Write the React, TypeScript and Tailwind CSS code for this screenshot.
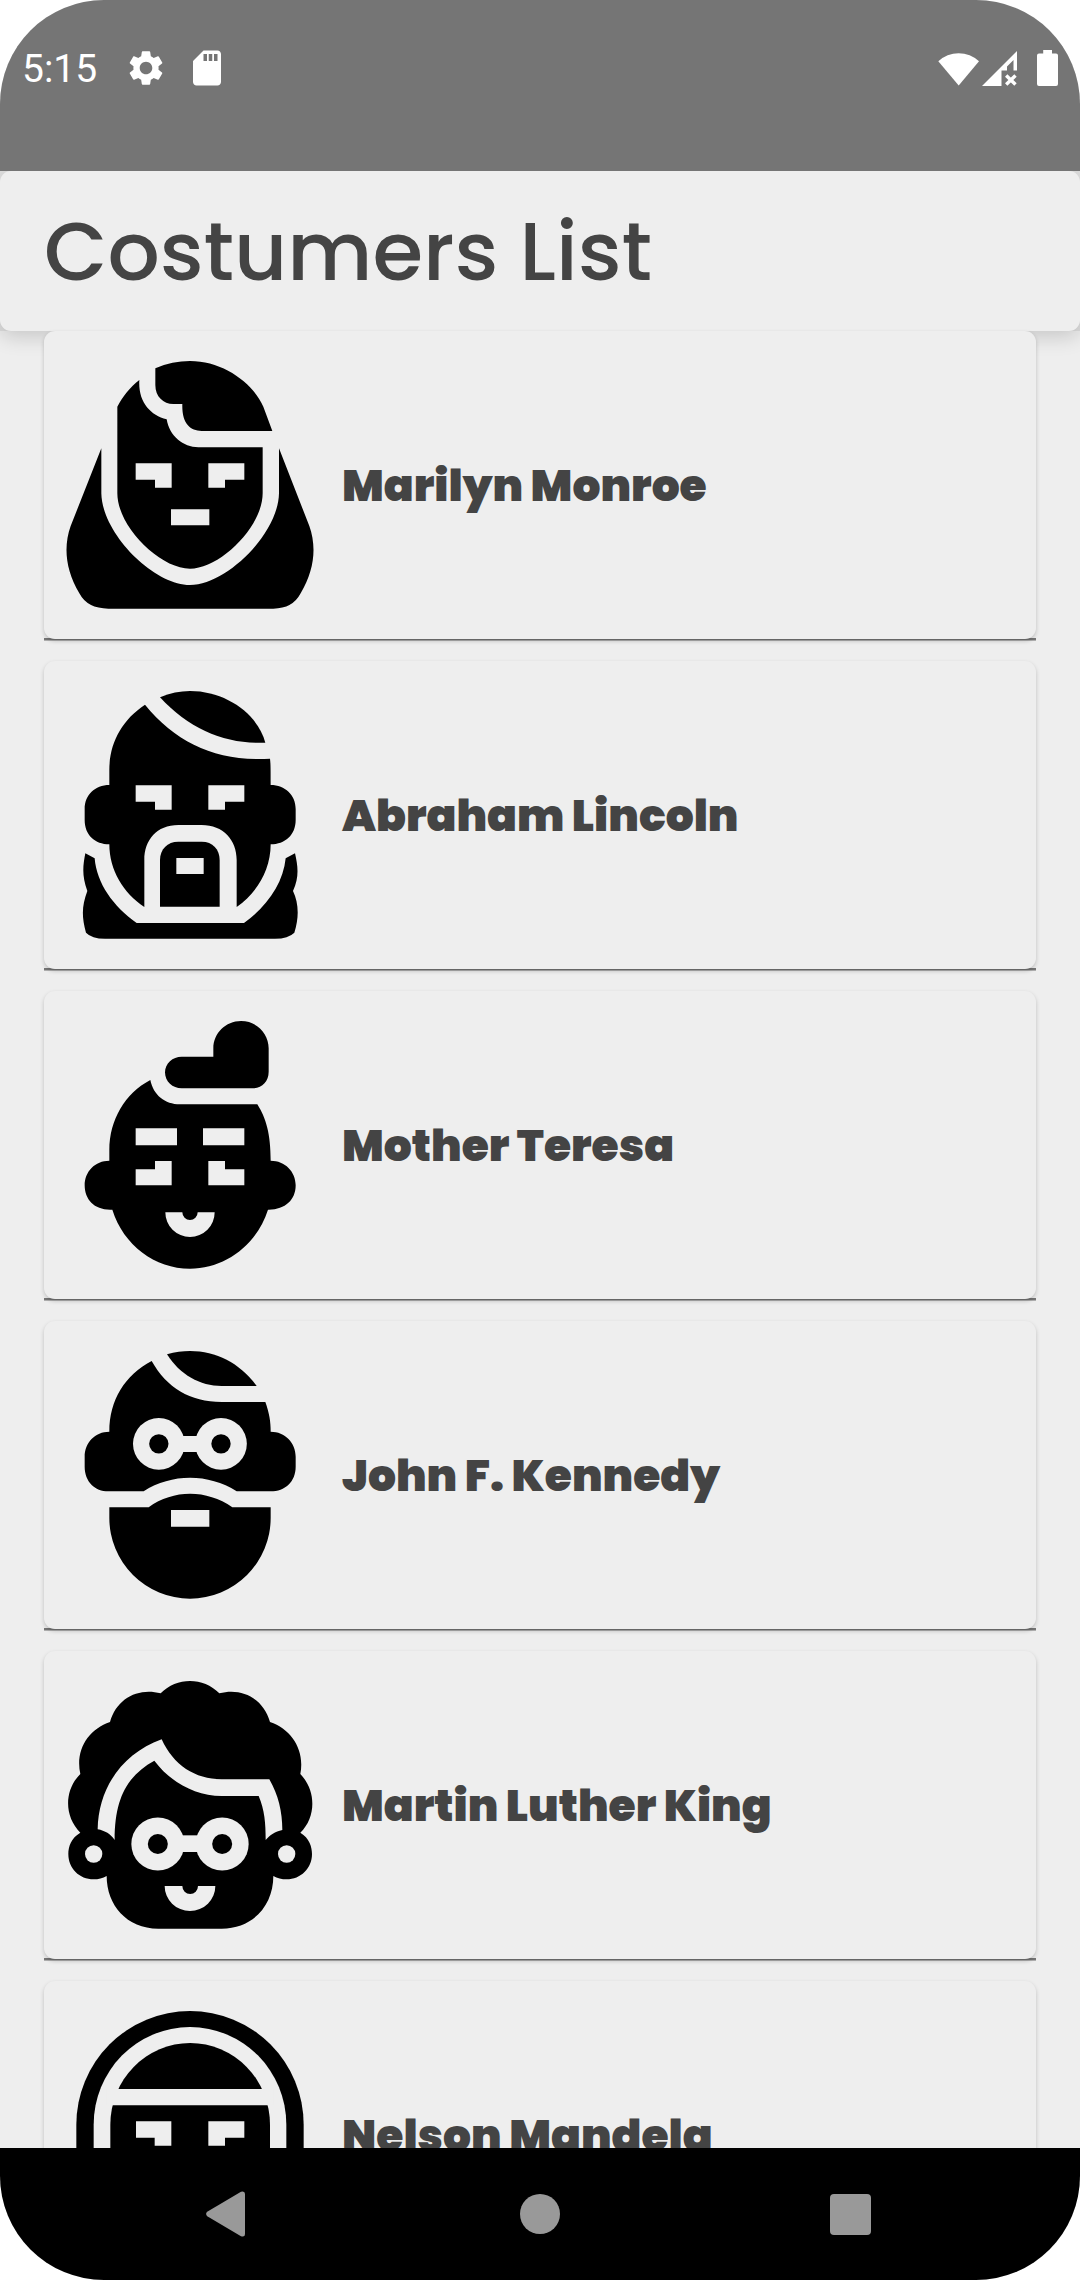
import type { ReactNode } from "react";
import { MdSdCard, MdSettings } from "react-icons/md";

const CUT = "#eeeeee";

function Avatar({ children }: { children: ReactNode }) {
  return (
    <svg viewBox="78 93 744 744" className="h-[248px] w-[248px] shrink-0" fill="#000">
      {children}
    </svg>
  );
}

function Marilyn() {
  return (
    <Avatar>
      <path d="M184 355 L92 588 C70 650 76 720 118 790 Q142 836 205 836 H700 Q758 836 782 790 C824 720 830 650 808 588 L717 355 V490 C715 610 560 765 450 765 C340 765 186 610 184 490 Z" />
      <path d="M298 150 C270 172 248 200 232 230 V490 C232 590 360 716 450 716 C540 716 668 590 668 490 V352 H475 C430 352 388 318 380 268 C330 255 294 215 298 150Z" />
      <path d="M346 115 C380 100 415 93 450 93 C550 93 640 160 670 230 L697 303 H485 C450 303 425 280 427 222 H400 C370 222 346 200 346 165Z" />
      <path fill={CUT} d="M287 400H395V473H345V449H287Z M505 400H613V449H555V473H505Z M393 538H508V586H393Z" />
    </Avatar>
  );
}

function Abraham() {
  return (
    <Avatar>
      <path d="M360 112 C390 99 420 93 450 93 C560 93 655 165 676 248 C560 254 450 210 360 112Z" />
      <path d="M315 134 C410 250 530 305 690 296 C692 312 692 330 692 375 C735 375 767 405 767 447 V480 C767 525 735 553 692 553 C692 630 650 700 590 741 V600 C590 540 550 495 485 495 H415 C350 495 313 540 313 600 V741 C250 700 208 630 208 553 C165 553 134 525 134 480 V447 C134 405 165 375 208 375 V330 C208 250 245 180 315 134Z" />
      <path d="M360 740 V600 C360 568 382 545 415 545 H485 C518 545 539 568 539 600 V740Z" />
      <path d="M136 580 L164 595 C170 670 220 740 290 789 H612 C680 740 730 670 737 595 L765 580 C774 620 778 650 759 693 C776 730 778 770 763 818 Q745 836 705 836 H195 Q155 836 138 818 C124 770 126 735 142 693 C126 650 128 620 136 580Z" />
      <path fill={CUT} d="M287 376H395V449H345V425H287Z M505 376H613V425H555V449H505Z M409 594H491V642H409Z" />
    </Avatar>
  );
}

function Teresa() {
  return (
    <Avatar>
      <path d="M520 200 V175 C520 130 557 93 603 93 C650 93 686 130 686 175 V245 C686 275 665 295 637 295 H425 C398 295 375 275 375 247 C375 220 398 200 425 200Z" />
      <path d="M331 270 C340 315 375 343 420 343 H652 C678 385 692 430 692 512 C735 512 767 545 767 586 C767 630 735 660 684 659 C650 765 555 836 450 836 C345 836 250 765 217 659 C165 662 134 630 134 586 C134 545 165 512 208 512 V480 C208 390 255 310 331 270Z" />
      <path fill={CUT} d="M287 415H411V466H287Z M489 415H613V466H489Z M345 513H395V586H287V538H345Z M505 513H555V538H613V586H505Z" />
      <path fill={CUT} d="M376 667H427A23 23 0 0 0 473 667H524A74 74 0 0 1 376 667Z" />
    </Avatar>
  );
}

function Kennedy() {
  return (
    <Avatar>
      <path d="M381 103 C405 95 428 93 450 93 C530 93 600 130 650 198 H545 C480 198 420 165 381 103Z" />
      <path d="M335 123 C380 203 450 246 545 246 H676 C688 280 692 305 692 335 C735 335 767 368 767 410 V440 C767 485 735 514 692 514 H590 C505 460 395 460 311 514 H205 C165 514 134 485 134 440 V410 C134 368 165 335 208 335 C208 240 255 165 335 123Z" />
      <path d="M208 562 H326 C400 508 500 508 577 562 H692 V594 A242 242 0 0 1 208 594Z" />
      <g fill={CUT}>
        <circle cx="356.500" cy="371.500" r="77.500" />
        <circle cx="543" cy="371.500" r="77.500" />
        <path d="M420 348H480V396H420Z M393 570H508V620H393Z" />
      </g>
      <circle cx="356.500" cy="371.500" r="29" />
      <circle cx="543" cy="371.500" r="29" />
    </Avatar>
  );
}

function Martin() {
  return (
    <Avatar>
      <path d="M362 130 C410 81 490 81 538 130 C605 112 670 145 690 216 C755 238 795 300 781 372 C828 420 830 500 781 548 C808 564 816 590 816 612 C816 655 782 688 740 688 C725 688 712 685 700 678 C700 765 640 836 545 836 H355 C260 836 200 765 200 678 C188 685 175 688 161 688 C118 688 85 655 85 612 C85 590 93 564 121 548 C72 500 72 420 121 372 C105 300 145 238 210 216 C230 145 295 112 362 130Z" />
      <g fill={CUT}>
        <path d="M173 538 C175 410 250 310 365 268 C400 345 465 388 545 388 H688 C715 435 727 485 727 540 C705 545 690 555 677 570 C677 520 674 480 656 438 H545 C465 438 390 395 343 332 C265 375 224 440 224 570 C212 552 195 542 173 538Z" />
        <circle cx="161" cy="612" r="26" />
        <circle cx="740" cy="612" r="26" />
        <circle cx="353.500" cy="582" r="79.500" />
        <circle cx="546.500" cy="582" r="79.500" />
        <path d="M420 556H480V606H420Z" />
        <path d="M374 708H427A23.500 24 0 0 0 474 708H526A76 75 0 0 1 374 708Z" />
      </g>
      <circle cx="353.500" cy="582" r="30" />
      <circle cx="546.500" cy="582" r="30" />
    </Avatar>
  );
}

function Nelson() {
  return (
    <Avatar>
      <path d="M109 836V434A341 341 0 0 1 791 434V836Z" />
      <path fill={CUT} d="M161 836V434A289 293 0 0 1 739 434V836Z" />
      <path d="M211 600V434A239.500 245 0 0 1 690 434V600A239.500 200 0 0 1 211 600Z" />
      <path fill={CUT} d="M200 327H700V376H200Z M288 424H394V497H344V473H288Z M505 424H613V473H555V497H505Z" />
    </Avatar>
  );
}

const customers = [
  { name: "Marilyn Monroe", art: <Marilyn /> },
  { name: "Abraham Lincoln", art: <Abraham /> },
  { name: "Mother Teresa", art: <Teresa /> },
  { name: "John F. Kennedy", art: <Kennedy /> },
  { name: "Martin Luther King", art: <Martin /> },
  { name: "Nelson Mandela", art: <Nelson /> },
];

function StatusBar() {
  return (
    <div className="relative z-20 h-[171px] shrink-0 bg-[#757575] text-white">
      <div className="flex h-[135px] items-center pr-[22px] pl-[22px]">
        <span className="mt-[4px] w-[103px] font-[Roboto,sans-serif] text-[39px] leading-none">5:15</span>
        <MdSettings className="h-[42px] w-[42px]" />
        <MdSdCard className="ml-[19px] h-[42px] w-[42px]" />
        <svg viewBox="0 0 120 36" className="ml-auto h-[36px] w-[120px]" fill="currentColor">
          <path d="M0.300 11.300 A29.500 29.500 0 0 1 41 11.300 L20.700 35.500Z" />
          <path fillRule="evenodd" d="M44 36 L79 1 V20.500 H75.500 V10 L69 16.500 V20.500 H63.500 V36Z" />
          <path d="M68.200 25.500 L77.500 34.500 M77.500 25.500 L68.200 34.500" stroke="currentColor" strokeWidth="3.400" />
          <path d="M105.200 0H114V3.600H118Q120 3.600 120 5.600V34Q120 36 118 36H101Q99 36 99 34V5.600Q99 3.600 101 3.600H105.200Z" />
        </svg>
      </div>
    </div>
  );
}

function NavBar() {
  return (
    <div className="relative z-20 flex h-[132px] shrink-0 items-center bg-black pl-[206px] text-[#999999]">
      <svg viewBox="0 0 39 46" className="h-[46px] w-[39px]" fill="currentColor">
        <path d="M1.200 20.800 L35 0.700 Q39 -0.500 39 3 V43 Q39 46.500 35 45.300 L1.200 25.200 Q-1 23 1.200 20.800Z" />
      </svg>
      <div className="ml-[275px] h-[40px] w-[40px] rounded-full bg-current" />
      <div className="ml-[270px] h-[41px] w-[41px] rounded-[4px] bg-current" />
    </div>
  );
}

export default function App() {
  return (
    <div className="h-[2280px] w-[1080px] bg-white">
      <div className="flex h-full flex-col overflow-hidden rounded-[104px] bg-[#eeeeee] font-[Poppins,Inter,sans-serif] text-[#444444]">
        <StatusBar />
        <div className="shrink-0 bg-[#dedede]">
          <header className="flex h-[160px] items-center rounded-[11px] bg-[#eeeeee] pl-[44px] shadow-[0_6px_20px_rgba(0,0,0,0.16)]">
            <h1 className="mt-[2px] text-[82px] leading-none font-medium whitespace-nowrap">Costumers List</h1>
          </header>
        </div>
        <ul className="relative z-10 flex min-h-0 flex-1 flex-col gap-[20px] px-[44px]">
          {customers.map((c) => (
            <li key={c.name} className="flex h-[310px] shrink-0 flex-col">
              <div className="relative z-10 flex h-[308px] items-center rounded-[11px] bg-[#eeeeee] pl-[22px] shadow-[0_2px_4px_rgba(0,0,0,0.2)]">
                {c.art}
                <span className="mt-[2px] ml-[28px] text-[44px] leading-none font-black whitespace-nowrap">{c.name}</span>
              </div>
              <div className="relative z-[5] -mt-[1px] h-[3px] border-b border-[#b0b0b0] bg-[#777777]" />
            </li>
          ))}
        </ul>
        <NavBar />
      </div>
    </div>
  );
}
